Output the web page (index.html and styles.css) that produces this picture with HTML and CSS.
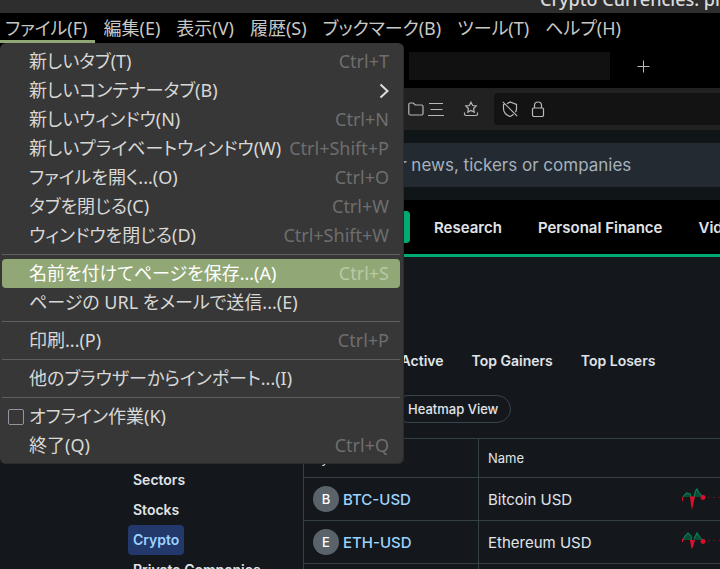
FILE: index.html
```
<!DOCTYPE html>
<html lang="ja">

<head>
    <meta charset="UTF-8">
    <meta name="viewport" content="width=device-width, initial-scale=1.0">
    <title>Crypto Currencies</title>
    <link rel="stylesheet" href="styles.css">
</head>

<body>
    <div class="titlebar"><span class="window-title">Crypto Currencies: prices</span></div>

    <div class="menubar">
        <button type="button" class="menubar-item active">ファイル(F)</button>
        <button type="button" class="menubar-item">編集(E)</button>
        <button type="button" class="menubar-item">表示(V)</button>
        <button type="button" class="menubar-item">履歴(S)</button>
        <button type="button" class="menubar-item">ブックマーク(B)</button>
        <button type="button" class="menubar-item">ツール(T)</button>
        <button type="button" class="menubar-item">ヘルプ(H)</button>

        <!-- File menu -->
        <div class="menu">
            <button type="button" class="menu-item">新しいタブ(T)<span class="key">Ctrl+T</span></button>
            <button type="button" class="menu-item">新しいコンテナータブ(B)
                <svg class="arrow" width="10" height="16" viewBox="0 0 10 16"><path d="M1.500 1.500l7 6.500-7 6.500"/></svg>
            </button>
            <button type="button" class="menu-item">新しいウィンドウ(N)<span class="key">Ctrl+N</span></button>
            <button type="button" class="menu-item">新しいプライベートウィンドウ(W)<span class="key">Ctrl+Shift+P</span></button>
            <button type="button" class="menu-item">ファイルを開く...(O)<span class="key">Ctrl+O</span></button>
            <button type="button" class="menu-item">タブを閉じる(C)<span class="key">Ctrl+W</span></button>
            <button type="button" class="menu-item">ウィンドウを閉じる(D)<span class="key">Ctrl+Shift+W</span></button>
            <hr>
            <button type="button" class="menu-item selected">名前を付けてページを保存...(A)<span class="key">Ctrl+S</span></button>
            <button type="button" class="menu-item">ページの URL をメールで送信...(E)</button>
            <hr>
            <button type="button" class="menu-item">印刷...(P)<span class="key">Ctrl+P</span></button>
            <hr>
            <button type="button" class="menu-item">他のブラウザーからインポート...(I)</button>
            <hr>
            <label class="menu-item check-item" for="offline"><input type="checkbox" id="offline">オフライン作業(K)</label>
            <button type="button" class="menu-item">終了(Q)<span class="key">Ctrl+Q</span></button>
        </div>
    </div>

    <div class="tabstrip">
        <div class="tab"></div>
        <button type="button" class="new-tab" aria-label="新しいタブ">
            <svg width="14" height="14" viewBox="0 0 14 14"><path d="M7.500 1.500v12M1.500 7.500h12"/></svg>
        </button>
    </div>

    <div class="toolbar">
        <svg class="icon" width="16" height="16" viewBox="0 0 16 16"><path d="M.8 3.500q0-1.500 1.500-1.500h3l2 2h6.200q1.500 0 1.500 1.500v7q0 1.500-1.500 1.500H2.300q-1.500 0-1.500-1.500z"/></svg>
        <svg class="icon list-icon" width="16" height="16" viewBox="0 0 16 16"><path d="M1 2.500h14M2.500 8.500h12M0 14.500h16"/></svg>
        <svg class="icon star-icon" width="16" height="16" viewBox="0 0 16 16"><path d="M8 1.200l1.600 3.300 3.600.5-2.600 2.500.6 3.600L8 9.400l-3.200 1.700.6-3.600L2.800 5l3.600-.5zM1.500 11.500v1.500q0 1.500 1.500 1.500h10q1.500 0 1.500-1.500v-1.500"/></svg>
        <div class="urlbar">
            <svg class="icon" width="16" height="16" viewBox="0 0 16 16"><path d="M5 2.800L8 1l6.500 2.500v4q0 2-1 3.700M2.500 3.500h-1v4q0 5.500 6.500 8 2-.8 3.500-2.200M.8.800l14.400 14.400"/></svg>
            <svg class="icon" width="16" height="16" viewBox="0 0 16 16"><path d="M4.500 7V4.500a3.500 3.500 0 0 1 7 0V7M3.500 7h9q1 0 1 1v6q0 1.500-1.500 1.500H4q-1.500 0-1.500-1.500V8q0-1 1-1z"/></svg>
        </div>
    </div>

    <div class="page">
        <div class="search-row">
            <input type="text" class="search" aria-label="Search" placeholder="Search for news, tickers or companies">
        </div>

        <nav class="site-nav">
            <a href="#" class="nav-button" aria-label="Portfolio"></a>
            <a href="#">Research</a>
            <a href="#">Personal Finance</a>
            <a href="#">Videos</a>
        </nav>

        <div class="content">
            <aside class="sidebar">
                <a href="#">Sectors</a>
                <a href="#">Stocks</a>
                <a href="#" class="current">Crypto</a>
                <a href="#">Private Companies</a>
            </aside>

            <main class="screener">
                <div class="tabs">
                    <a href="#">Most Active</a>
                    <a href="#">Top Gainers</a>
                    <a href="#">Top Losers</a>
                </div>
                <button type="button" class="heatmap">Heatmap View</button>

                <table class="quotes">
                    <colgroup>
                        <col class="col-symbol">
                        <col class="col-name">
                        <col class="col-chart">
                    </colgroup>
                    <thead>
                        <tr>
                            <th>Symbol</th>
                            <th>Name</th>
                            <th></th>
                        </tr>
                    </thead>
                    <tbody>
                        <tr>
                            <td><div class="symbol"><span class="badge">B</span><a href="#">BTC-USD</a></div></td>
                            <td>Bitcoin USD</td>
                            <td>
                                <svg class="spark" width="60" height="25" viewBox="0 0 60 25">
                                    <path class="up-fill" d="M1 10L3 7.500 5 6l3 1 1 3zM12 10l1.500-6L15 2l2 4 4 4z"/>
                                    <path class="up" d="M1 10L3 7.500 5 6l3 1 1 3M12 10l1.500-6L15 2l2 4 4 4"/>
                                    <path class="down" d="M8 9.500h5L11 18l-1 5-1-5zM0 10h1.200L.5 14.500H0z"/>
                                    <circle class="down" cx="21" cy="10.500" r="2.400"/>
                                    <path class="dots" d="M26 10.500h34"/>
                                </svg>
                            </td>
                        </tr>
                        <tr>
                            <td><div class="symbol"><span class="badge">E</span><a href="#">ETH-USD</a></div></td>
                            <td>Ethereum USD</td>
                            <td>
                                <svg class="spark" width="60" height="25" viewBox="0 0 60 25">
                                    <path class="up-fill" d="M1 10l2-4 3-3 3 3 1 4zM12 10l1-4L15 3l2 3 3 4z"/>
                                    <path class="up" d="M1 10l2-4 3-3 3 3 .5 4M12 9l1-2L15 3l2 3 3 4"/>
                                    <path class="down" d="M8 10h5L11 17l-1.500 2zM0 9h1.200v3H0z"/>
                                    <circle class="down" cx="21" cy="11.500" r="2.400"/>
                                    <path class="dots" d="M26 10.500h34"/>
                                </svg>
                            </td>
                        </tr>
                        <tr>
                            <td></td>
                            <td></td>
                            <td></td>
                        </tr>
                    </tbody>
                </table>
            </main>
        </div>
    </div>
</body>

</html>
```
FILE: styles.css
```
* {
    box-sizing: border-box;
}

body {
    margin: 0;
    height: 100vh;
    overflow: hidden;
    background: #14181c;
    color: #e0e4e9;
    font-family: Inter, "Liberation Sans", sans-serif;
}

a {
    color: inherit;
    text-decoration: none;
    white-space: nowrap;
}

button {
    border: none;
    background: none;
    color: inherit;
    font: inherit;
}

/* window chrome */
.titlebar {
    display: flex;
    justify-content: flex-end;
    align-items: flex-end;
    height: 13px;
    overflow: hidden;
    background: #2e2e2e;
    color: #dadada;
}

.window-title {
    flex: none;
    width: 180px;
    font: 500 18px/28px "Noto Sans", sans-serif;
    white-space: nowrap;
}

.menubar {
    position: relative;
    display: flex;
    gap: 1px;
    height: 30px;
    background: #000;
    color: #c8c8c4;
    font-family: "Noto Sans", "Noto Sans CJK JP", sans-serif;
    font-size: 18px;
    font-weight: 400;
    font-feature-settings: "palt";
}

.menubar-item {
    padding: 3px 8px 0 5px;
    border-bottom: 3px solid transparent;
    line-height: 24px;
    white-space: nowrap;
}

.menubar-item + .menubar-item {
    padding-left: 7px;
}

.menubar-item.active {
    border-color: #91a876;
}

.menu {
    position: absolute;
    top: 30px;
    left: 0;
    z-index: 10;
    width: 404px;
    padding: 4px 4px 4px 2px;
    border-radius: 6px;
    background: #373737;
    box-shadow: inset -1px -1px 0 #2c2c2c;
    color: #d8d8d6;
}

.menu-item {
    display: flex;
    align-items: center;
    justify-content: space-between;
    width: 100%;
    height: 29px;
    padding: 0 11px 0 27px;
    border-radius: 4px;
    line-height: 29px;
    white-space: nowrap;
}

.menu-item.selected {
    background: #91a876;
    color: #fff;
}

.key {
    color: #6e6e6e;
}

.selected .key {
    color: #b9c8a6;
}

.arrow {
    fill: none;
    stroke: #dededc;
    stroke-width: 2;
}

.menu hr {
    height: 1px;
    margin: 4px 0;
    border: none;
    background: #5e5e5e;
}

.check-item {
    justify-content: flex-start;
    gap: 5px;
    padding-left: 6px;
}

.check-item input {
    appearance: none;
    width: 16px;
    height: 16px;
    margin: 0;
    border: 1px solid #9794a0;
    border-radius: 2px;
}

.tabstrip {
    display: flex;
    align-items: center;
    gap: 20px;
    height: 45px;
    padding-left: 409px;
    background: #000;
}

.tab {
    width: 201px;
    height: 28px;
    background: #111;
}

.new-tab {
    display: flex;
    padding: 6px;
}

.new-tab svg {
    fill: none;
    stroke: #bbb;
}

.toolbar {
    display: flex;
    align-items: center;
    height: 42px;
    padding-left: 408px;
    background: #212121;
}

.icon {
    flex: none;
    fill: none;
    stroke: #b8b8b8;
    stroke-width: 1.2;
}

.list-icon {
    margin-left: 4px;
}

.star-icon {
    margin-left: 19px;
}

.urlbar {
    display: flex;
    flex: 1;
    align-items: center;
    gap: 12px;
    height: 32px;
    margin-left: 15px;
    padding-left: 8px;
    border-radius: 4px 0 0 4px;
    background: #131313;
}

/* finance page */
.search-row {
    padding: 13px 0 13px 303px;
    background: #101518;
}

.search {
    display: block;
    width: 100%;
    height: 44px;
    padding: 0 0 0 20px;
    border: none;
    background: #232a31;
    font: 400 17px Inter, sans-serif;
}

.search::placeholder {
    color: #a5b1bd;
}

.site-nav {
    display: flex;
    align-items: center;
    gap: 36px;
    height: 57px;
    padding-left: 303px;
    border-bottom: 3px solid #00ab73;
    overflow: hidden;
    background: #000;
    font-size: 15px;
    font-weight: 600;
}

.nav-button {
    flex: none;
    width: 107px;
    height: 32px;
    margin-right: -12px;
    border-radius: 4px;
    background: #00ab73;
}

.content {
    display: flex;
}

.sidebar {
    display: flex;
    flex: none;
    flex-direction: column;
    align-items: flex-start;
    width: 303px;
    padding: 208px 0 0 128px;
    font-size: 14px;
    font-weight: 600;
}

.sidebar a {
    padding: 0 5px;
    border-radius: 4px;
    line-height: 30px;
}

.sidebar .current {
    background: #23386b;
    color: #9cd3ff;
}

.screener {
    flex: 1;
    min-width: 0;
    padding-top: 91px;
}

.tabs {
    display: flex;
    gap: 28px;
    padding-left: 60px;
    font-size: 14px;
    font-weight: 600;
    line-height: 26px;
}

.heatmap {
    display: block;
    height: 28px;
    margin: 21px 0 15px 91px;
    padding: 0 12px 0 13px;
    border: 1px solid #3a444c;
    border-radius: 14px;
    font-size: 13px;
    font-weight: 500;
}

.quotes {
    width: 100%;
    table-layout: fixed;
    border-collapse: collapse;
    border-top: 1px solid #354045;
    border-left: 1px solid #354045;
    font-size: 15px;
}

.col-symbol {
    width: 175px;
}

.col-name {
    width: 203px;
}

.quotes th,
.quotes td {
    height: 43px;
    padding: 0 0 0 9px;
    border-bottom: 1px solid #354045;
    text-align: left;
    white-space: nowrap;
}

.quotes th {
    height: 39px;
    font-size: 13px;
    font-weight: 400;
}

.quotes th:first-child,
.quotes td:first-child {
    border-right: 1px solid #354045;
}

.quotes th:last-child,
.quotes td:last-child {
    padding: 0;
    overflow: hidden;
}

.symbol {
    display: flex;
    align-items: center;
    gap: 4px;
    color: #9cd3ff;
    font-weight: 500;
}

.badge {
    width: 26px;
    height: 26px;
    border-radius: 50%;
    background: #5b636a;
    color: #fff;
    font-size: 13px;
    line-height: 26px;
    text-align: center;
}

.spark {
    display: block;
}

.up-fill {
    fill: #0c4a35;
}

.up {
    fill: none;
    stroke: #087f50;
    stroke-width: 1.2;
}

.down {
    fill: #df0f2b;
}

.dots {
    stroke: #68121f;
    stroke-dasharray: 2 3;
}
```
